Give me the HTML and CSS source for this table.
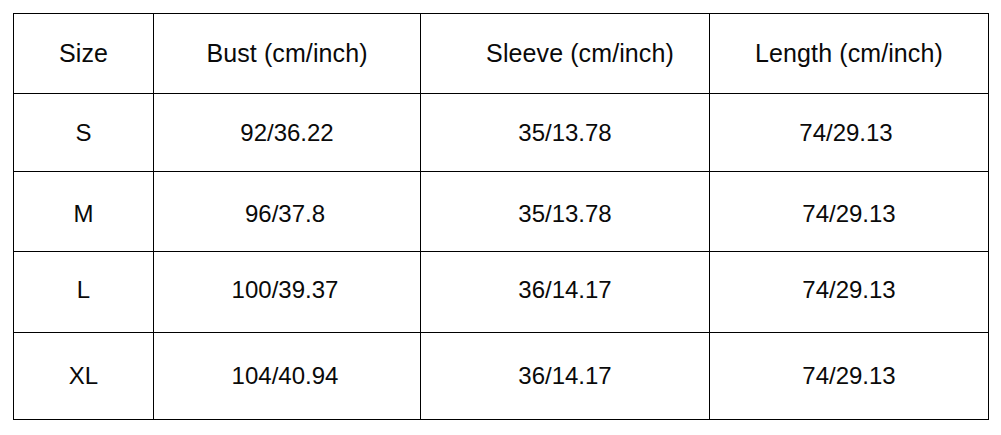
FILE: index.html
```html
<!DOCTYPE html>
<html lang="en">
<head>
<meta charset="utf-8">
<title>Size chart</title>
<link rel="stylesheet" href="styles.css">
</head>
<body>
<div class="chart">
  <div class="cell head c1">Size</div>
  <div class="cell head c2">Bust (cm/inch)</div>
  <div class="cell head c3 sleeve">Sleeve (cm/inch)</div>
  <div class="cell head c4">Length (cm/inch)</div>

  <div class="cell c1">S</div>
  <div class="cell c2">92/36.22</div>
  <div class="cell c3">35/13.78</div>
  <div class="cell c4 len">74/29.13</div>

  <div class="cell c1 low">M</div>
  <div class="cell c2 low bust-left">96/37.8</div>
  <div class="cell c3 low">35/13.78</div>
  <div class="cell c4 low">74/29.13</div>

  <div class="cell c1 high">L</div>
  <div class="cell c2 high bust-left">100/39.37</div>
  <div class="cell c3 high">36/14.17</div>
  <div class="cell c4 high">74/29.13</div>

  <div class="cell c1">XL</div>
  <div class="cell c2 bust-left">104/40.94</div>
  <div class="cell c3">36/14.17</div>
  <div class="cell c4">74/29.13</div>
</div>
</body>
</html>
```

FILE: styles.css
```css
html, body {
  margin: 0;
  padding: 0;
  background: #ffffff;
}

body {
  padding: 13px;
  font-family: "Liberation Sans", Arial, sans-serif;
  color: #0a0a0a;
}

.chart {
  display: grid;
  grid-template-columns: 140px 267px 289px 279px;
  grid-template-rows: 80px 78px 80px 81px 87px;
  width: 975px;
  border-top: 1px solid #000;
  border-left: 1px solid #000;
}

.cell {
  display: flex;
  align-items: center;
  justify-content: center;
  border-right: 1px solid #000;
  border-bottom: 1px solid #000;
  font-size: 24px;
  line-height: 1;
}

.head {
  font-size: 25px;
  letter-spacing: 0.1px;
}

.sleeve {
  padding-left: 30px;
}

.len {
  padding-right: 6px;
}

.low {
  padding-top: 4px;
}

.high {
  padding-bottom: 4px;
}

.bust-left {
  padding-right: 4px;
}
```
